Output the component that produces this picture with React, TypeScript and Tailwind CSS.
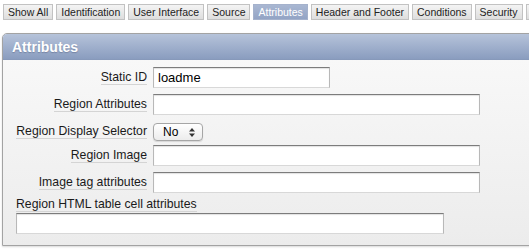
import React from "react";

const tabs = [
  "Show All",
  "Identification",
  "User Interface",
  "Source",
  "Attributes",
  "Header and Footer",
  "Conditions",
  "Security",
];

function Label({ children }: { children: React.ReactNode }) {
  return (
    <div className="w-[144px] shrink-0 flex justify-end">
      <span className="block border-b border-[#d4d4d4] leading-[13px] text-[12.25px] text-[#1a1a1a] whitespace-nowrap">
        {children}
      </span>
    </div>
  );
}

function TextInput({ width, value }: { width: number; value?: string }) {
  return (
    <div
      className="h-[21px] bg-white border border-t-[#7c7c7c] border-l-[#b8b8b8] border-r-[#b8b8b8] border-b-[#d8d8d8] shadow-[inset_0_1px_1px_rgba(0,0,0,0.12)] pl-[4px] text-[13px] leading-[19px] text-black"
      style={{ width }}
    >
      {value}
    </div>
  );
}

export default function App() {
  return (
    <div
      className="w-[529px] h-[249px] overflow-hidden bg-white"
      style={{ fontFamily: '"Liberation Sans", Arial, sans-serif' }}
    >
      <div className="flex gap-[3px] pl-[3px] pt-[4px] whitespace-nowrap">
        {tabs.map((t) =>
          t === "Attributes" ? (
            <div
              key={t}
              className="h-[16px] px-[4px] text-[10.5px] leading-[15px] text-white bg-gradient-to-b from-[#a9b7d2] to-[#93a4c5] border border-[#a5b2cc]"
            >
              {t}
            </div>
          ) : (
            <div
              key={t}
              className="h-[16px] px-[4px] text-[10.5px] leading-[14px] text-[#222] bg-gradient-to-b from-[#f4f4f4] to-[#dedede] border border-[#c2c2c2]"
            >
              {t}
            </div>
          )
        )}
        <div className="h-[16px] w-[40px] shrink-0 bg-gradient-to-b from-[#f4f4f4] to-[#dedede] border border-[#c2c2c2]" />
      </div>

      <div className="mt-[13px] ml-[2px] w-[580px] border border-[#a3a3a3] rounded-tl-[5px] overflow-hidden shadow-[0_1px_2px_rgba(0,0,0,0.15)]">
        <div className="h-[26px] pl-[9px] bg-gradient-to-b from-[#b6c3da] to-[#8a9dbf] border-b border-[#8799ba]">
          <span className="text-[14px] font-bold leading-[26px] text-white [text-shadow:0_1px_1px_rgba(60,70,100,0.35)]">
            Attributes
          </span>
        </div>
        <div className="bg-gradient-to-b from-[#f8f8f8] to-[#ececec] pt-[7px] pb-[11px]">
          <div className="flex items-center gap-[6px] h-[21px]">
            <Label>Static ID</Label>
            <TextInput width={177} value="loadme" />
          </div>
          <div className="flex items-center gap-[6px] h-[21px] mt-[6px]">
            <Label>Region Attributes</Label>
            <TextInput width={327} />
          </div>
          <div className="flex items-center gap-[6px] h-[21px] mt-[6px]">
            <Label>Region Display Selector</Label>
            <div className="relative w-[50px] h-[18px] rounded-[4px] border border-[#a6a6a6] bg-gradient-to-b from-white to-[#ececec] shadow-[0_1px_1px_rgba(0,0,0,0.12)] pl-[9px] text-[12px] leading-[16px] text-black">
              No
              <svg
                className="absolute right-[7px] top-[4px]"
                width="6"
                height="9"
                viewBox="0 0 6 9"
              >
                <path d="M3 0 L6 3.5 L0 3.5 Z" fill="#333" />
                <path d="M3 9 L6 5.5 L0 5.5 Z" fill="#333" />
              </svg>
            </div>
          </div>
          <div className="flex items-center gap-[6px] h-[21px] mt-[3px]">
            <Label>Region Image</Label>
            <TextInput width={327} />
          </div>
          <div className="flex items-center gap-[6px] h-[21px] mt-[6px]">
            <Label>Image tag attributes</Label>
            <TextInput width={327} />
          </div>
          <div className="pl-[13px] mt-[4px]">
            <span className="block w-fit border-b border-[#d4d4d4] leading-[14px] text-[12.25px] text-[#1a1a1a]">
              Region HTML table cell attributes
            </span>
            <div className="mt-[1px]">
              <TextInput width={428} />
            </div>
          </div>
        </div>
      </div>
    </div>
  );
}
